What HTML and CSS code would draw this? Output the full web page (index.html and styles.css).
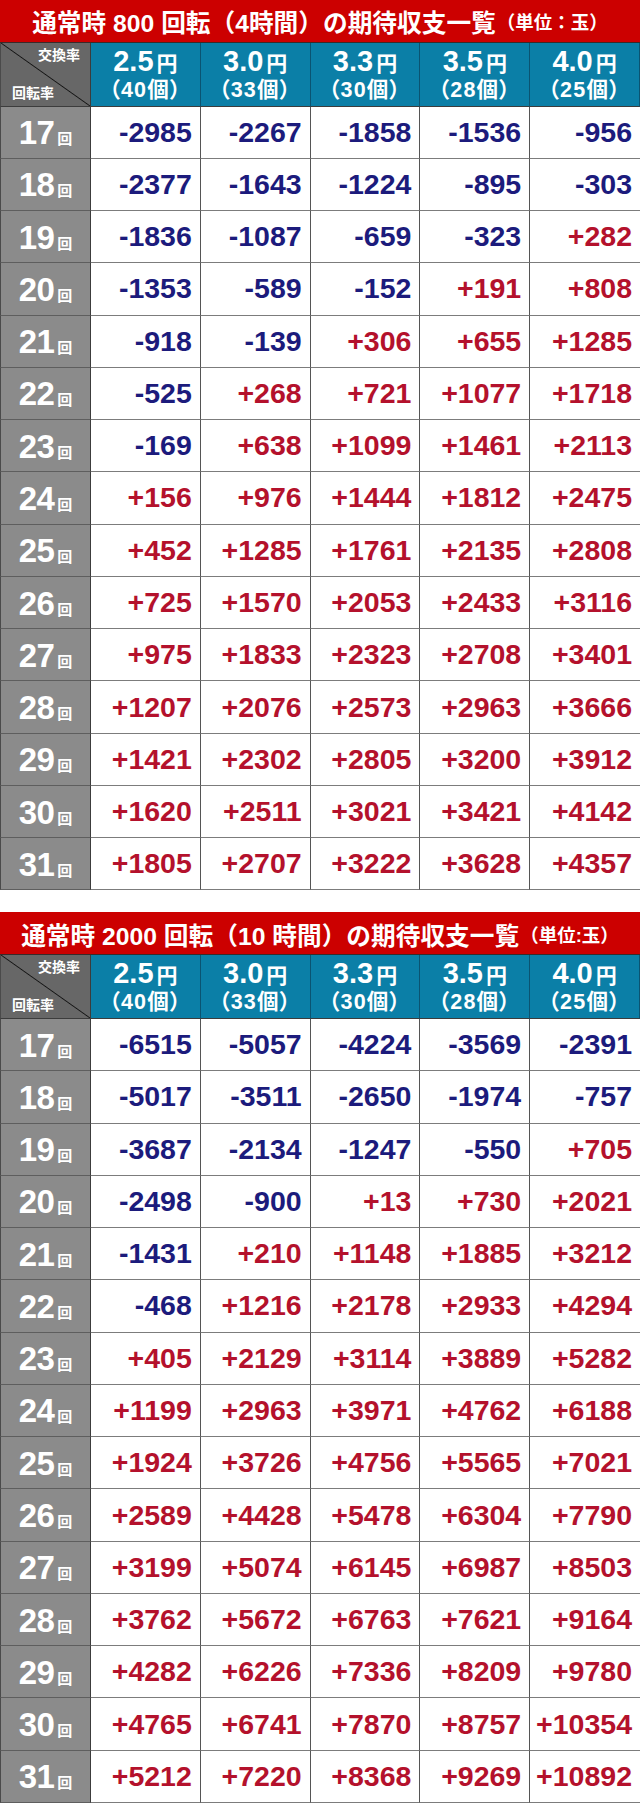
FILE: index.html
```html
<!DOCTYPE html>
<html lang="ja">
<head>
<meta charset="utf-8">
<title>期待収支一覧</title>
<link rel="stylesheet" href="styles.css">
</head>
<body>
<section class="block">
  <div class="title">通常時 800 回転（4時間）の期待収支一覧<span class="unit">（単位：玉）</span></div>
  <div class="grid">
    <div class="corner"><span class="ctop">交換率</span><span class="cbot">回転率</span></div>
    <div class="rate"><div class="r1">2.5<span class="yen">円</span></div><div class="r2">（40個）</div></div>
    <div class="rate"><div class="r1">3.0<span class="yen">円</span></div><div class="r2">（33個）</div></div>
    <div class="rate"><div class="r1">3.3<span class="yen">円</span></div><div class="r2">（30個）</div></div>
    <div class="rate"><div class="r1">3.5<span class="yen">円</span></div><div class="r2">（28個）</div></div>
    <div class="rate"><div class="r1">4.0<span class="yen">円</span></div><div class="r2">（25個）</div></div>

    <div class="lbl"><span class="n">17<span class="kai">回</span></span></div>
    <div class="v neg">-2985</div><div class="v neg">-2267</div><div class="v neg">-1858</div><div class="v neg">-1536</div><div class="v neg">-956</div>
    <div class="lbl"><span class="n">18<span class="kai">回</span></span></div>
    <div class="v neg">-2377</div><div class="v neg">-1643</div><div class="v neg">-1224</div><div class="v neg">-895</div><div class="v neg">-303</div>
    <div class="lbl"><span class="n">19<span class="kai">回</span></span></div>
    <div class="v neg">-1836</div><div class="v neg">-1087</div><div class="v neg">-659</div><div class="v neg">-323</div><div class="v pos">+282</div>
    <div class="lbl"><span class="n">20<span class="kai">回</span></span></div>
    <div class="v neg">-1353</div><div class="v neg">-589</div><div class="v neg">-152</div><div class="v pos">+191</div><div class="v pos">+808</div>
    <div class="lbl"><span class="n">21<span class="kai">回</span></span></div>
    <div class="v neg">-918</div><div class="v neg">-139</div><div class="v pos">+306</div><div class="v pos">+655</div><div class="v pos">+1285</div>
    <div class="lbl"><span class="n">22<span class="kai">回</span></span></div>
    <div class="v neg">-525</div><div class="v pos">+268</div><div class="v pos">+721</div><div class="v pos">+1077</div><div class="v pos">+1718</div>
    <div class="lbl"><span class="n">23<span class="kai">回</span></span></div>
    <div class="v neg">-169</div><div class="v pos">+638</div><div class="v pos">+1099</div><div class="v pos">+1461</div><div class="v pos">+2113</div>
    <div class="lbl"><span class="n">24<span class="kai">回</span></span></div>
    <div class="v pos">+156</div><div class="v pos">+976</div><div class="v pos">+1444</div><div class="v pos">+1812</div><div class="v pos">+2475</div>
    <div class="lbl"><span class="n">25<span class="kai">回</span></span></div>
    <div class="v pos">+452</div><div class="v pos">+1285</div><div class="v pos">+1761</div><div class="v pos">+2135</div><div class="v pos">+2808</div>
    <div class="lbl"><span class="n">26<span class="kai">回</span></span></div>
    <div class="v pos">+725</div><div class="v pos">+1570</div><div class="v pos">+2053</div><div class="v pos">+2433</div><div class="v pos">+3116</div>
    <div class="lbl"><span class="n">27<span class="kai">回</span></span></div>
    <div class="v pos">+975</div><div class="v pos">+1833</div><div class="v pos">+2323</div><div class="v pos">+2708</div><div class="v pos">+3401</div>
    <div class="lbl"><span class="n">28<span class="kai">回</span></span></div>
    <div class="v pos">+1207</div><div class="v pos">+2076</div><div class="v pos">+2573</div><div class="v pos">+2963</div><div class="v pos">+3666</div>
    <div class="lbl"><span class="n">29<span class="kai">回</span></span></div>
    <div class="v pos">+1421</div><div class="v pos">+2302</div><div class="v pos">+2805</div><div class="v pos">+3200</div><div class="v pos">+3912</div>
    <div class="lbl"><span class="n">30<span class="kai">回</span></span></div>
    <div class="v pos">+1620</div><div class="v pos">+2511</div><div class="v pos">+3021</div><div class="v pos">+3421</div><div class="v pos">+4142</div>
    <div class="lbl"><span class="n">31<span class="kai">回</span></span></div>
    <div class="v pos">+1805</div><div class="v pos">+2707</div><div class="v pos">+3222</div><div class="v pos">+3628</div><div class="v pos">+4357</div>
  </div>
</section>

<section class="block">
  <div class="title">通常時 2000 回転（10 時間）の期待収支一覧<span class="unit">（単位:玉）</span></div>
  <div class="grid">
    <div class="corner"><span class="ctop">交換率</span><span class="cbot">回転率</span></div>
    <div class="rate"><div class="r1">2.5<span class="yen">円</span></div><div class="r2">（40個）</div></div>
    <div class="rate"><div class="r1">3.0<span class="yen">円</span></div><div class="r2">（33個）</div></div>
    <div class="rate"><div class="r1">3.3<span class="yen">円</span></div><div class="r2">（30個）</div></div>
    <div class="rate"><div class="r1">3.5<span class="yen">円</span></div><div class="r2">（28個）</div></div>
    <div class="rate"><div class="r1">4.0<span class="yen">円</span></div><div class="r2">（25個）</div></div>

    <div class="lbl"><span class="n">17<span class="kai">回</span></span></div>
    <div class="v neg">-6515</div><div class="v neg">-5057</div><div class="v neg">-4224</div><div class="v neg">-3569</div><div class="v neg">-2391</div>
    <div class="lbl"><span class="n">18<span class="kai">回</span></span></div>
    <div class="v neg">-5017</div><div class="v neg">-3511</div><div class="v neg">-2650</div><div class="v neg">-1974</div><div class="v neg">-757</div>
    <div class="lbl"><span class="n">19<span class="kai">回</span></span></div>
    <div class="v neg">-3687</div><div class="v neg">-2134</div><div class="v neg">-1247</div><div class="v neg">-550</div><div class="v pos">+705</div>
    <div class="lbl"><span class="n">20<span class="kai">回</span></span></div>
    <div class="v neg">-2498</div><div class="v neg">-900</div><div class="v pos">+13</div><div class="v pos">+730</div><div class="v pos">+2021</div>
    <div class="lbl"><span class="n">21<span class="kai">回</span></span></div>
    <div class="v neg">-1431</div><div class="v pos">+210</div><div class="v pos">+1148</div><div class="v pos">+1885</div><div class="v pos">+3212</div>
    <div class="lbl"><span class="n">22<span class="kai">回</span></span></div>
    <div class="v neg">-468</div><div class="v pos">+1216</div><div class="v pos">+2178</div><div class="v pos">+2933</div><div class="v pos">+4294</div>
    <div class="lbl"><span class="n">23<span class="kai">回</span></span></div>
    <div class="v pos">+405</div><div class="v pos">+2129</div><div class="v pos">+3114</div><div class="v pos">+3889</div><div class="v pos">+5282</div>
    <div class="lbl"><span class="n">24<span class="kai">回</span></span></div>
    <div class="v pos">+1199</div><div class="v pos">+2963</div><div class="v pos">+3971</div><div class="v pos">+4762</div><div class="v pos">+6188</div>
    <div class="lbl"><span class="n">25<span class="kai">回</span></span></div>
    <div class="v pos">+1924</div><div class="v pos">+3726</div><div class="v pos">+4756</div><div class="v pos">+5565</div><div class="v pos">+7021</div>
    <div class="lbl"><span class="n">26<span class="kai">回</span></span></div>
    <div class="v pos">+2589</div><div class="v pos">+4428</div><div class="v pos">+5478</div><div class="v pos">+6304</div><div class="v pos">+7790</div>
    <div class="lbl"><span class="n">27<span class="kai">回</span></span></div>
    <div class="v pos">+3199</div><div class="v pos">+5074</div><div class="v pos">+6145</div><div class="v pos">+6987</div><div class="v pos">+8503</div>
    <div class="lbl"><span class="n">28<span class="kai">回</span></span></div>
    <div class="v pos">+3762</div><div class="v pos">+5672</div><div class="v pos">+6763</div><div class="v pos">+7621</div><div class="v pos">+9164</div>
    <div class="lbl"><span class="n">29<span class="kai">回</span></span></div>
    <div class="v pos">+4282</div><div class="v pos">+6226</div><div class="v pos">+7336</div><div class="v pos">+8209</div><div class="v pos">+9780</div>
    <div class="lbl"><span class="n">30<span class="kai">回</span></span></div>
    <div class="v pos">+4765</div><div class="v pos">+6741</div><div class="v pos">+7870</div><div class="v pos">+8757</div><div class="v pos">+10354</div>
    <div class="lbl"><span class="n">31<span class="kai">回</span></span></div>
    <div class="v pos">+5212</div><div class="v pos">+7220</div><div class="v pos">+8368</div><div class="v pos">+9269</div><div class="v pos">+10892</div>
  </div>
</section>
</body>
</html>
```

FILE: styles.css
```css
html, body {
  margin: 0;
  padding: 0;
  background: #ffffff;
}

body {
  font-family: "Liberation Sans", "Noto Sans CJK JP", sans-serif;
  font-weight: 700;
}

.block {
  width: 640px;
}

.block + .block {
  margin-top: 22px;
}

.title {
  box-sizing: border-box;
  height: 42.5px;
  background: #cc0000;
  color: #ffffff;
  border-bottom: 1px solid #3a2a2a;
  display: flex;
  align-items: center;
  justify-content: center;
  font-size: 24.7px;
  white-space: nowrap;
  padding-top: 1px;
}

.title .unit {
  font-size: 18.5px;
  margin-left: 1px;
}

.grid {
  display: grid;
  grid-template-columns: 91px repeat(5, 1fr);
  grid-template-rows: 64px repeat(15, 52.27px);
}

.grid > div {
  box-sizing: border-box;
}

.corner {
  background: linear-gradient(to top right, #676767 calc(50% - 0.9px), #151515 50%, #676767 calc(50% + 0.9px));
  border-left: 1px solid #4a4a4a;
  border-right: 1px solid #3c3c3c;
  border-bottom: 1px solid #3c3c3c;
  color: #ffffff;
  font-size: 14px;
  line-height: 16px;
  display: flex;
  flex-direction: column;
  justify-content: space-between;
  padding: 4px 10px 5px 11px;
}

.ctop {
  align-self: flex-end;
}

.cbot {
  align-self: flex-start;
}

.rate {
  background: #0b7fa7;
  color: #ffffff;
  border-right: 1px solid #0a5472;
  border-bottom: 1px solid #3c3c3c;
  display: flex;
  flex-direction: column;
  align-items: center;
  justify-content: center;
  padding-top: 1px;
}

.rate:last-child {
  border-right: none;
}

.r1 {
  font-size: 29px;
  line-height: 29px;
}

.r1 .yen {
  font-size: 21px;
  margin-left: 3px;
}

.r2 {
  font-size: 21.5px;
  line-height: 25px;
  font-feature-settings: "palt";
  letter-spacing: 1.2px;
}

.lbl {
  background: #8b8b8b;
  color: #ffffff;
  border-left: 1px solid #4a4a4a;
  border-right: 1px solid #3c3c3c;
  border-bottom: 1px solid #5e5e5e;
  display: flex;
  align-items: center;
  justify-content: center;
  padding-top: 2px;
}

.lbl .n {
  font-size: 33px;
  letter-spacing: -0.5px;
}

.lbl .kai {
  font-size: 15px;
  margin-left: 3px;
  letter-spacing: 0;
}

.v {
  background: #ffffff;
  border-right: 1px solid #555555;
  border-bottom: 1px solid #7c7c7c;
  display: flex;
  align-items: center;
  justify-content: flex-end;
  padding-right: 8px;
  font-size: 28.5px;
}

.v:nth-child(6n+6) {
  border-right: none;
}

.neg {
  color: #1c1b7c;
}

.pos {
  color: #b4112c;
}
```
